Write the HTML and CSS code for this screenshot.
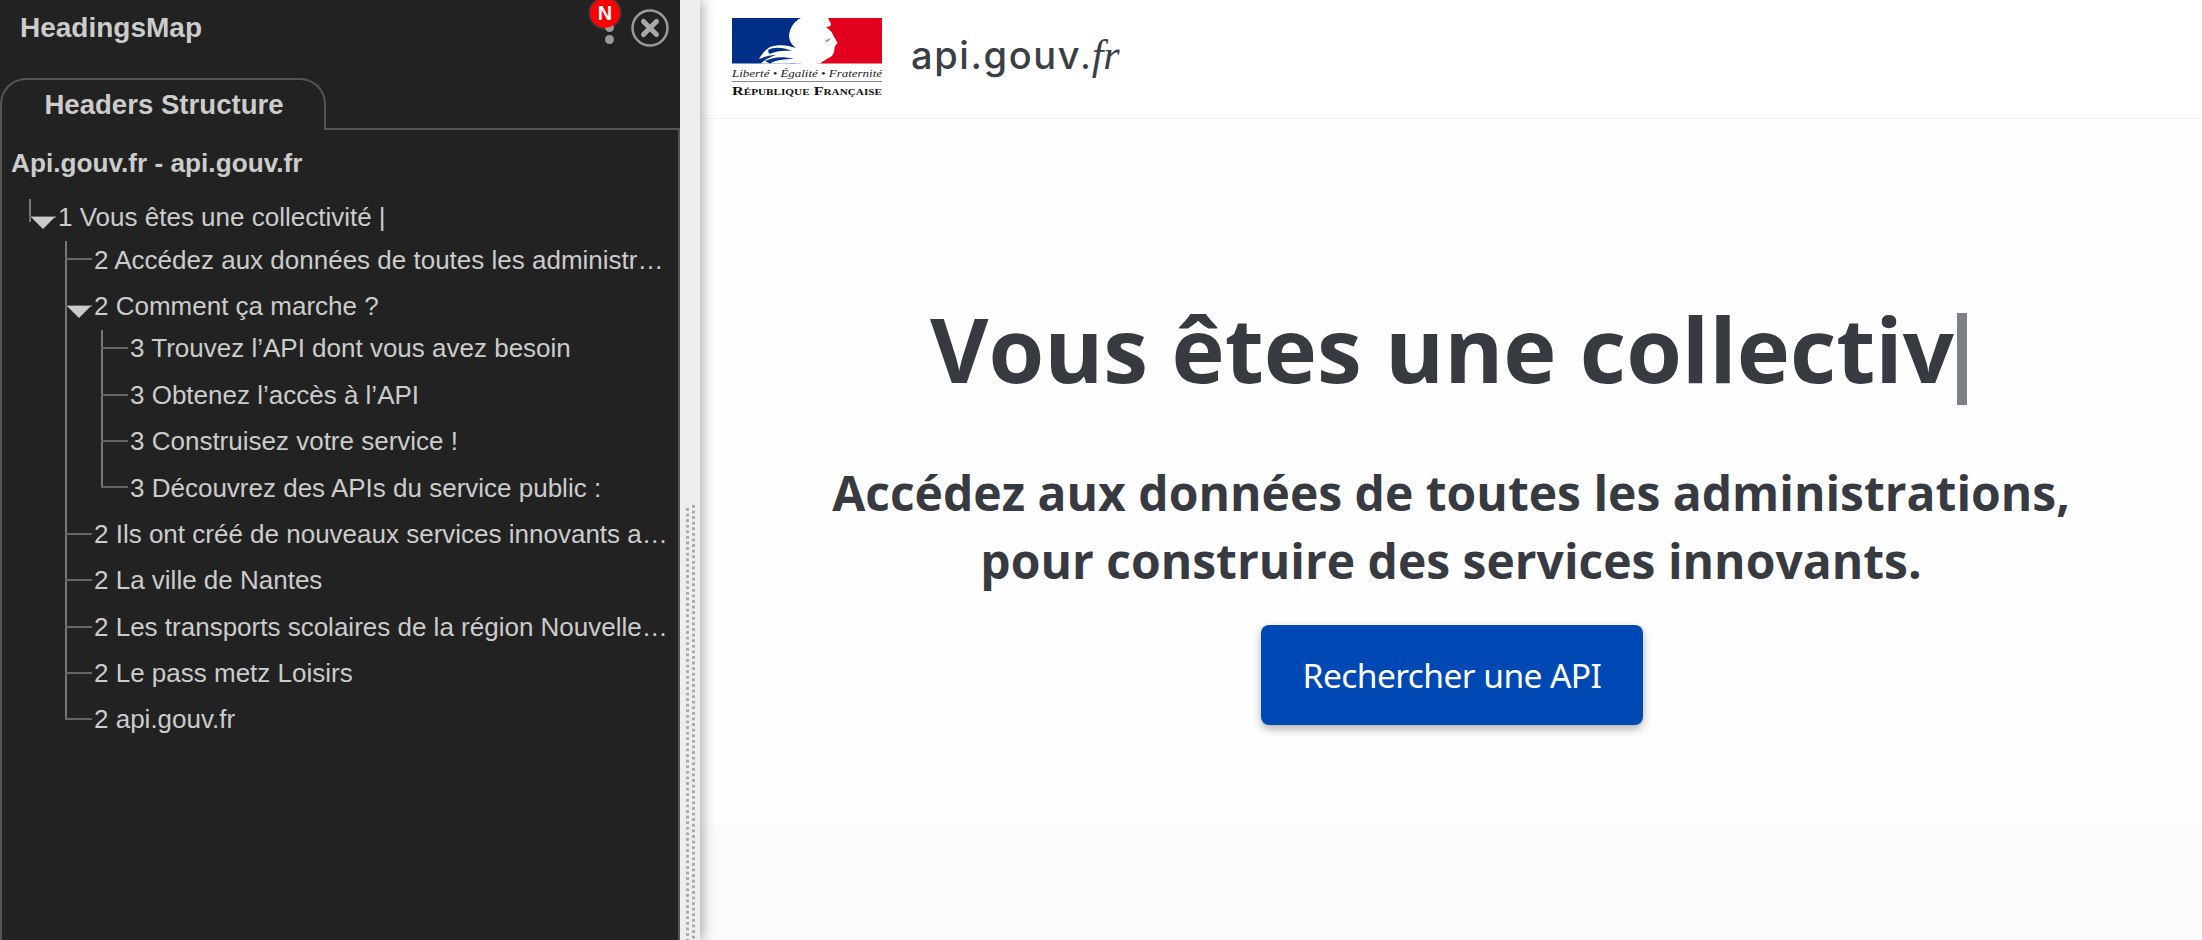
FILE: index.html
```html
<!DOCTYPE html>
<html lang="fr">
<head>
<meta charset="utf-8">
<title>api.gouv.fr</title>
<link rel="stylesheet" href="styles.css">
</head>
<body>
<div class="app">
  <aside class="panel">
    <header class="panel-head">
      <span class="panel-title">HeadingsMap</span>
      <div class="panel-actions">
        <span class="menu"><i></i><i></i><i></i><b class="badge">N</b></span>
        <svg class="close" width="38" height="38" viewBox="0 0 38 38"><circle cx="19" cy="19" r="17.5"/><path d="M12.5 12.5 25.5 25.5M25.5 12.5 12.5 25.5"/></svg>
      </div>
    </header>
    <div class="tabs"><div class="tab">Headers Structure</div><div class="tab-rest"></div></div>
    <div class="panel-body">
      <h2 class="doc-title">Api.gouv.fr - api.gouv.fr</h2>
      <ul class="tree">
        <li class="open"><div class="row"><span>1 Vous êtes une collectivité |</span></div>
          <ul>
            <li><div class="row"><span>2 Accédez aux données de toutes les administr…</span></div></li>
            <li class="open"><div class="row"><span>2 Comment ça marche ?</span></div>
              <ul>
                <li><div class="row"><span>3 Trouvez l’API dont vous avez besoin</span></div></li>
                <li><div class="row"><span>3 Obtenez l’accès à l’API</span></div></li>
                <li><div class="row"><span>3 Construisez votre service !</span></div></li>
                <li><div class="row"><span>3 Découvrez des APIs du service public :</span></div></li>
              </ul>
            </li>
            <li><div class="row"><span>2 Ils ont créé de nouveaux services innovants a…</span></div></li>
            <li><div class="row"><span>2 La ville de Nantes</span></div></li>
            <li><div class="row"><span>2 Les transports scolaires de la région Nouvelle…</span></div></li>
            <li><div class="row"><span>2 Le pass metz Loisirs</span></div></li>
            <li><div class="row"><span>2 api.gouv.fr</span></div></li>
          </ul>
        </li>
      </ul>
    </div>
  </aside>
  <div class="splitter"><div class="grip"></div></div>
  <main class="site">
    <header class="site-head">
      <svg class="marianne" width="150" height="84" viewBox="0 0 150 84">
        <rect class="f-white" width="150" height="45.5"/>
        <rect class="f-blue" width="69" height="45.5"/>
        <path class="f-blue" d="M69 0H58V45.5H64Z"/>
        <rect class="f-red" x="85" width="65" height="45.5"/>
        <path class="f-white" d="M69 0C62 3 58 10 57 17C57 23 60 27 64 30C56 27 46 26 38 29C33 32 29 37 27 41C32 39 38 37 44 37C38 39 32 42 29 45.5H88C92 42 97 40 100 38C103 34 102 31 103 28C105 26 106 25 105 24L101 17C100 13 96 11 94 9C97 9 99 8 99 6L96 0Z"/>
        <path class="f-blue" d="M36 32C42 29 50 29 60 33C52 32 44 33 37 36ZM33 43C42 39 50 38 62 41C52 41 44 42 38 45.5Z"/>
        <path class="f-eye" d="M93 23C95 21 97 21 99 20C98 22 96 24 94 24Z"/>
        <text class="motto" x="0" y="59" textLength="150" lengthAdjust="spacingAndGlyphs">Liberté • Égalité • Fraternité</text>
        <rect class="rule" y="63" width="150" height="1"/>
        <text class="rf" x="0" y="77" textLength="150" lengthAdjust="spacingAndGlyphs">République Française</text>
      </svg>
      <div class="wordmark">api.gouv<em>.fr</em></div>
    </header>
    <section class="hero">
      <h1 class="hero-title">Vous êtes une collectiv<span class="caret"></span></h1>
      <p class="hero-sub">Accédez aux données de toutes les administrations,<br>pour construire des services innovants.</p>
      <a class="cta" href="#">Rechercher une API</a>
    </section>
    <section class="next"></section>
  </main>
</div>
</body>
</html>
```

FILE: styles.css
```css
* { box-sizing: border-box; }
html, body { margin: 0; height: 100%; overflow: hidden; }
.app { display: flex; height: 940px; width: 2202px; background: #fff; }

/* Panel */
.panel {
  position: relative;
  z-index: 2;
  flex: 0 0 680px;
  width: 680px;
  min-width: 0;
  display: flex;
  flex-direction: column;
  background: #222;
  color: #ccc;
  font-family: "Liberation Sans", Arial, sans-serif;
  font-size: 26px;
}
.panel-head {
  flex: 0 0 78px;
  display: flex;
  justify-content: space-between;
  padding: 9px 11px 0 20px;
}
.panel-title { font-size: 28px; font-weight: 700; line-height: 38px; }
.panel-actions { display: flex; align-items: flex-start; }
.menu { position: relative; width: 10px; margin-right: 16px; display: flex; flex-direction: column; gap: 3px; padding-top: 2px; }
.menu i { width: 9px; height: 9px; border-radius: 50%; background: #999; }
.badge {
  position: absolute;
  left: -15px;
  top: -11px;
  width: 30px;
  height: 30px;
  border-radius: 50%;
  background: #f00;
  color: #fff;
  font-size: 20px;
  line-height: 30px;
  text-align: center;
  box-shadow: 0 0 3px rgba(255, 255, 255, .35);
}
.close { fill: none; stroke: #999; stroke-width: 2.5; }
.close path { stroke: #aaa; stroke-width: 5; stroke-linecap: round; }

.tabs { flex: 0 0 50px; display: flex; }
.tab {
  flex: 0 0 326px;
  border: 2px solid #555;
  border-bottom: 0;
  border-radius: 26px 26px 0 0;
  font-size: 27.6px;
  font-weight: 700;
  text-align: center;
  line-height: 50px;
  padding-left: 2px;
}
.tab-rest { flex: 1; border-bottom: 2px solid #555; }

.panel-body {
  flex: 1;
  min-height: 0;
  border-left: 2px solid #555;
  border-right: 2px solid #555;
  padding: 12px 10px 0 9px;
}
.doc-title { margin: 0; font-size: 26.2px; font-weight: 700; line-height: 42px; }

/* Tree */
.tree, .tree ul { list-style: none; margin: 0; padding: 0; }
.tree { margin: 10px 0 0 18px; }
.tree ul { margin: -4px 0 0 36px; }
.tree li { position: relative; min-width: 0; }
.tree li::before {
  content: "";
  position: absolute;
  left: 0;
  top: 0;
  bottom: 0;
  border-left: 2px solid #777;
}
.tree li:first-child::before { top: 5px; }
.tree li:last-child::before { bottom: auto; height: 23px; }
.row {
  position: relative;
  display: flex;
  align-items: center;
  height: 46.4px;
  padding-left: 29px;
  line-height: 32px;
}
.row::before {
  content: "";
  position: absolute;
  left: 0;
  top: 22px;
  width: 27px;
  border-top: 2px solid #666;
}
.row span { min-width: 0; white-space: nowrap; }
.tree li.open > .row::after {
  content: "";
  position: absolute;
  left: 2px;
  top: 23px;
  border-left: 12px solid transparent;
  border-right: 12px solid transparent;
  border-top: 12px solid #ccc;
}

/* Splitter */
.splitter {
  position: relative;
  z-index: 1;
  flex: 0 0 20px;
  background: #eee;
  box-shadow: 4px 0 12px rgba(0, 0, 0, .28);
}
.grip {
  width: 9px;
  height: 435px;
  margin: 505px 0 0 6px;
  background:
    linear-gradient(#aaa 50%, transparent 50%) 0 3px / 3px 5.6px repeat-y,
    linear-gradient(#aaa 50%, transparent 50%) 6px 0 / 3px 5.6px repeat-y;
}

/* Site */
.site { flex: 1; min-width: 0; display: flex; flex-direction: column; font-family: "Open Sans", "Noto Sans", sans-serif; color: #373b41; }
.site-head {
  flex: 0 0 119px;
  display: flex;
  align-items: flex-start;
  padding: 18px 0 0 32px;
  background: #fff;
  border-bottom: 1px solid #f3f3f3;
}
.f-blue { fill: #002e86; }
.f-red { fill: #e2001f; }
.f-white { fill: #fff; }
.f-eye { fill: #999; }
.motto { font: italic 11px "Liberation Serif", serif; fill: #222; }
.rule { fill: #888; }
.rf { font: 700 13px "Liberation Serif", serif; font-variant: small-caps; fill: #111; }
.wordmark {
  margin: 12px 0 0 29px;
  font-family: Inter, "Open Sans", sans-serif;
  font-size: 38px;
  font-weight: 500;
  line-height: 50px;
  letter-spacing: 1.6px;
  color: #3a3f45;
}
.wordmark em { font-family: "Liberation Serif", serif; font-size: 42px; font-weight: 400; letter-spacing: 0; }

.hero {
  flex: 0 0 706px;
  display: flex;
  flex-direction: column;
  align-items: center;
  background: #fefefe;
  padding-top: 167px;
}
.hero-title {
  margin: 0 5px 0 0;
  font-size: 90px;
  font-weight: 700;
  line-height: 124px;
  display: flex;
  align-items: flex-start;
  white-space: nowrap;
}
.caret { display: block; width: 10px; height: 92px; margin: 27px 0 0 3px; background: #7c8086; }
.hero-sub {
  margin: 49px 0 0;
  font-size: 48px;
  font-weight: 700;
  line-height: 67.5px;
  text-align: center;
  white-space: nowrap;
}
.cta {
  display: block;
  margin: 31px 0 0 2px;
  width: 382px;
  height: 100px;
  border-radius: 8px;
  background: #0049b5;
  color: #fff;
  font-family: "Noto Sans", sans-serif;
  font-size: 33.6px;
  letter-spacing: -.6px;
  line-height: 100px;
  text-align: center;
  text-decoration: none;
  box-shadow: 0 4px 10px rgba(0, 0, 0, .3);
}
.next { flex: 1; background: #fbfbfb; }
```
